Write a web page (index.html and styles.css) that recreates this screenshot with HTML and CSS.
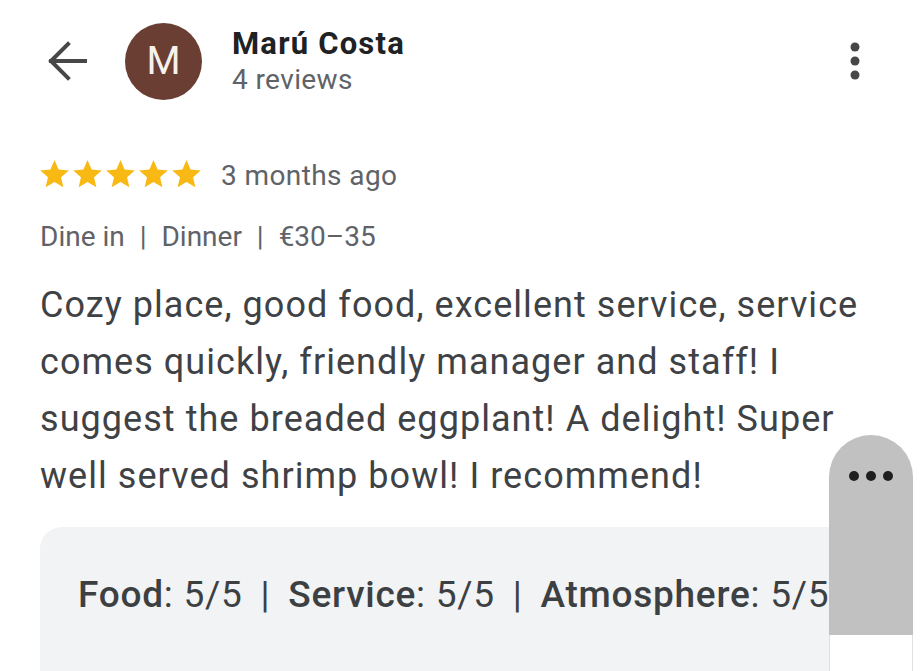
FILE: index.html
```html
<!DOCTYPE html>
<html lang="en">
<head>
<meta charset="utf-8">
<title>Review</title>
<link rel="stylesheet" href="styles.css">
</head>
<body>
<div class="page">
  <header class="header">
    <svg class="back" viewBox="0 0 40 40" width="40" height="40" aria-hidden="true">
      <path d="M38 20H4M21 3L4 20L21 37" fill="none" stroke="#474747" stroke-width="4" stroke-linecap="square" stroke-linejoin="miter"/>
    </svg>
    <div class="avatar">M</div>
    <div class="who">
      <div class="name">Marú Costa</div>
      <div class="count">4 reviews</div>
    </div>
    <svg class="kebab" viewBox="0 0 10 40" width="10" height="40" aria-hidden="true">
      <circle cx="5" cy="6" r="4.5" fill="#474747"/>
      <circle cx="5" cy="20" r="4.5" fill="#474747"/>
      <circle cx="5" cy="34" r="4.5" fill="#474747"/>
    </svg>
  </header>

  <div class="rating">
    <div class="stars">
      <svg viewBox="0 0 24 24" width="33" height="33"><path d="M12 2.2l2.95 6.9 7.45.65-5.65 4.9 1.7 7.3L12 18.1l-6.45 3.85 1.7-7.3L1.6 9.75l7.45-.65z" fill="#f8b914"/></svg>
      <svg viewBox="0 0 24 24" width="33" height="33"><path d="M12 2.2l2.95 6.9 7.45.65-5.65 4.9 1.7 7.3L12 18.1l-6.45 3.85 1.7-7.3L1.6 9.75l7.45-.65z" fill="#f8b914"/></svg>
      <svg viewBox="0 0 24 24" width="33" height="33"><path d="M12 2.2l2.95 6.9 7.45.65-5.65 4.9 1.7 7.3L12 18.1l-6.45 3.85 1.7-7.3L1.6 9.75l7.45-.65z" fill="#f8b914"/></svg>
      <svg viewBox="0 0 24 24" width="33" height="33"><path d="M12 2.2l2.95 6.9 7.45.65-5.65 4.9 1.7 7.3L12 18.1l-6.45 3.85 1.7-7.3L1.6 9.75l7.45-.65z" fill="#f8b914"/></svg>
      <svg viewBox="0 0 24 24" width="33" height="33"><path d="M12 2.2l2.95 6.9 7.45.65-5.65 4.9 1.7 7.3L12 18.1l-6.45 3.85 1.7-7.3L1.6 9.75l7.45-.65z" fill="#f8b914"/></svg>
    </div>
    <span class="when">3 months ago</span>
  </div>

  <div class="meta">Dine in <span class="sep">|</span> Dinner <span class="sep">|</span> €30–35</div>

  <p class="text">Cozy place, good food, excellent service, service comes quickly, friendly manager and staff! I suggest the breaded eggplant! A delight! Super well served shrimp bowl! I recommend!</p>

  <div class="scores">
    <b>Food</b>: 5/5 <span class="sep">|</span> <b>Service</b>: 5/5 <span class="sep">|</span> <b>Atmosphere</b>: 5/5
  </div>

  <div class="handle">
    <div class="grip"><i></i><i></i><i></i></div>
    <div class="foot"></div>
  </div>
</div>
</body>
</html>
```

FILE: styles.css
```css
* { box-sizing: border-box; }
html, body { margin: 0; padding: 0; background: #fff; }
body {
  font-family: Roboto, "Noto Sans", "Liberation Sans", sans-serif;
  color: #3c4043;
  width: 921px;
  height: 671px;
  overflow: hidden;
}
.page { position: relative; height: 671px; }

.header {
  display: flex;
  align-items: center;
  height: 122px;
  padding: 0 61px 0 47px;
}
.back { flex: none; display: block; }
.avatar {
  flex: none;
  width: 77px;
  height: 77px;
  margin-left: 38px;
  border-radius: 50%;
  background: #6a3e33;
  color: #f7f1ec;
  font-size: 39px;
  display: flex;
  align-items: center;
  justify-content: center;
}
.who { margin-left: 30px; padding-top: 2px; }
.name {
  font-size: 31px;
  font-weight: 700;
  letter-spacing: 1.2px;
  color: #202124;
  line-height: 36px;
}
.count {
  font-size: 28px;
  letter-spacing: 0.4px;
  color: #5f6368;
  line-height: 36px;
}
.kebab { margin-left: auto; display: block; }

.rating {
  display: flex;
  align-items: center;
  margin-top: 29px;
  padding-left: 38px;
  height: 44px;
}
.stars { display: flex; }
.stars svg { display: block; }
.when {
  margin-left: 18px;
  padding-top: 5px;
  font-size: 28px;
  letter-spacing: 0.4px;
  color: #5f6368;
}

.meta {
  margin-top: 25px;
  padding-left: 40px;
  font-size: 28px;
  line-height: 34px;
  color: #5f6368;
}
.meta .sep { margin: 0 8px; }

.text {
  margin: 23px 0 0;
  padding: 0 40px;
  font-size: 36px;
  letter-spacing: 1.05px;
  line-height: 57px;
  color: #3f4245;
}

.scores {
  margin: 22px 8px 0 40px;
  height: 160px;
  background: #f1f3f4;
  border-radius: 22px 0 0 0;
  padding: 46px 0 0 38px;
  font-size: 37px;
  letter-spacing: 0.75px;
  color: #3c4043;
  white-space: nowrap;
}
.scores b { font-weight: 500; }
.scores .sep { margin: 0 8px; }

.handle {
  position: absolute;
  left: 829px;
  top: 435px;
  width: 84px;
  height: 236px;
  display: flex;
  flex-direction: column;
}
.grip {
  flex: 1;
  background: #c1c1c1;
  border-radius: 42px 42px 0 0;
  display: flex;
  justify-content: center;
  gap: 7px;
  padding-top: 36px;
}
.grip i {
  display: block;
  width: 10px;
  height: 10px;
  border-radius: 50%;
  background: #1f1f1f;
}
.foot {
  height: 36px;
  background: #fff;
  border-left: 1px solid #e0e0e0;
  border-right: 1px solid #e0e0e0;
}
```
